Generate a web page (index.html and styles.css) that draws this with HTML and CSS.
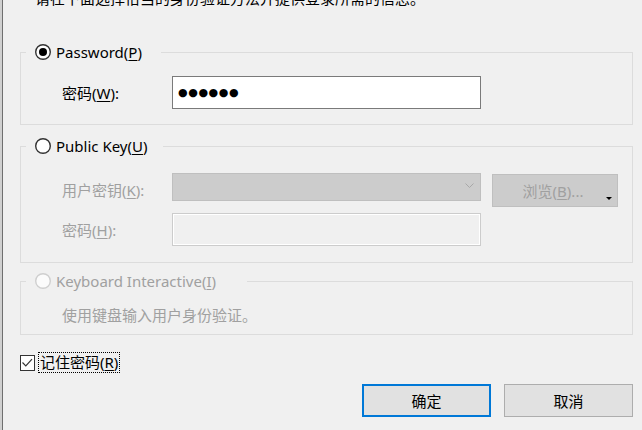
FILE: index.html
```html
<!DOCTYPE html>
<html lang="zh-CN">
<head>
<meta charset="utf-8">
<title>身份验证</title>
<link rel="stylesheet" href="styles.css">
</head>
<body>
<div class="window">
  <div class="edge"></div>
  <main class="dialog">
    <p class="intro">请在下面选择恰当的身份验证方法并提供登录所需的信息。</p>

    <fieldset class="group group--password">
      <legend class="legend legend--password">
        <svg class="radio" width="16" height="16" viewBox="0 0 16 16"><circle cx="8" cy="8" r="7.3" fill="#fff" stroke="#333" stroke-width="1.4"/><circle cx="8" cy="8" r="4" fill="#000"/></svg>
        <span class="legend-text">Password(<u>P</u>)</span>
      </legend>
      <div class="group-body group-body--password">
        <div class="row">
          <span class="label">密码(<u>W</u>):</span>
          <div class="textbox"><span class="mask">●●●●●●</span></div>
        </div>
      </div>
    </fieldset>

    <fieldset class="group group--key">
      <legend class="legend legend--key">
        <svg class="radio" width="16" height="16" viewBox="0 0 16 16"><circle cx="8" cy="8" r="7.3" fill="#fff" stroke="#333" stroke-width="1.4"/></svg>
        <span class="legend-text">Public Key(<u>U</u>)</span>
      </legend>
      <div class="group-body group-body--key">
        <div class="row row--key">
          <span class="label label--tall is-disabled">用户密钥(<u>K</u>):</span>
          <div class="combo">
            <svg class="chevron" width="9" height="6" viewBox="0 0 9 6"><polyline points="0.5,0.5 4.5,4.5 8.5,0.5" fill="none" stroke="#a8a8a8" stroke-width="1"/></svg>
          </div>
          <button class="browse" type="button" disabled>浏览(<u>B</u>)...<span class="drop-mark"></span></button>
        </div>
        <div class="row row--passphrase">
          <span class="label is-disabled">密码(<u>H</u>):</span>
          <div class="textbox textbox--disabled"></div>
        </div>
      </div>
    </fieldset>

    <fieldset class="group group--kbd">
      <legend class="legend legend--kbd">
        <svg class="radio" width="16" height="16" viewBox="0 0 16 16"><circle cx="8" cy="8" r="7.3" fill="#fbfbfb" stroke="#cfcfcf" stroke-width="1.4"/></svg>
        <span class="legend-text is-disabled">Keyboard Interactive(<u>I</u>)</span>
      </legend>
      <div class="group-body group-body--kbd">
        <p class="desc is-disabled">使用键盘输入用户身份验证。</p>
      </div>
    </fieldset>

    <div class="remember">
      <svg class="checkbox" width="15" height="16" viewBox="0 0 15 16"><rect x="0.5" y="0.5" width="14" height="15" fill="#fff" stroke="#333"/><polyline points="2.5,7.5 5.8,10.8 12,4.2" fill="none" stroke="#333" stroke-width="1.2"/></svg>
      <span class="remember-label">记住密码(<u>R</u>)</span>
    </div>

    <div class="actions">
      <button class="btn btn--default" type="button">确定</button>
      <button class="btn" type="button">取消</button>
    </div>
  </main>
</div>
</body>
</html>
```
FILE: styles.css
```css
* { box-sizing: border-box; }

html, body {
  margin: 0;
  height: 100%;
}

body {
  background: #f0f0f0;
  color: #000;
  font-family: "Noto Sans", "Noto Sans CJK SC", sans-serif;
  font-size: 15px;
  line-height: 20px;
  overflow: hidden;
}

u {
  text-decoration: underline;
  text-decoration-thickness: 1px;
  text-underline-offset: 2px;
}

.window {
  display: flex;
  height: 430px;
}

.edge {
  flex: none;
  width: 3px;
  background: #d0d0d0;
  border-right: 1px solid #6f6f6f;
}

.dialog {
  flex: none;
  width: 630px;
  padding-left: 17px;
  display: flex;
  flex-direction: column;
}

.intro {
  margin: -12px 0 0 15px;
  height: 20px;
  white-space: nowrap;
}

.group {
  margin: 0;
  min-width: 0;
  border: 1px solid #dcdcdc;
  padding: 0 0 0 5px;
}

.group--password { margin-top: 34px; }
.group--key { margin-top: 11px; }
.group--kbd { margin-top: 8px; }

.legend {
  height: 20px;
  padding: 0 0 0 9px;
  margin: 0;
  display: flex;
  align-items: center;
  gap: 5px;
  white-space: nowrap;
}

.legend--password { width: 135px; }
.legend--key { width: 137px; }
.legend--kbd { width: 221px; }

.radio { flex: none; display: block; }

.group-body { padding-left: 36px; }
.group-body--password { padding-top: 14px; padding-bottom: 15px; }
.group-body--key { padding-top: 17px; padding-bottom: 16px; }
.group-body--kbd { padding-top: 14px; padding-bottom: 9px; }

.row {
  display: flex;
  align-items: center;
}

.row--key {
  align-items: flex-start;
  height: 34px;
}

.row--passphrase { margin-top: 6px; }

.label {
  flex: none;
  width: 110px;
  white-space: nowrap;
}

.label--tall {
  align-self: stretch;
  display: flex;
  align-items: center;
}

.is-disabled { color: #a0a0a0; }

.textbox {
  flex: none;
  width: 309px;
  height: 33px;
  border: 1px solid #7a7a7a;
  background: #fff;
  padding-left: 5px;
  display: flex;
  align-items: center;
}

.textbox--disabled {
  border-color: #cccccc;
  background: #f0f0f0;
  box-shadow: inset 0 0 0 1px #ffffff;
}

.mask {
  font-family: "DejaVu Sans", sans-serif;
  font-size: 11px;
  letter-spacing: 0.6px;
  line-height: 1;
}

.combo {
  flex: none;
  width: 309px;
  height: 28px;
  background: #cccccc;
  border: 1px solid #bfbfbf;
  display: flex;
  align-items: center;
  justify-content: flex-end;
  padding-right: 6px;
}

.chevron { display: block; margin-top: -2px; }

.browse {
  position: relative;
  flex: none;
  width: 126px;
  height: 33px;
  margin: 1px 0 0 11px;
  background: #cccccc;
  border: 1px solid #bfbfbf;
  color: #a0a0a0;
  font: inherit;
  padding: 0 4px 0 0;
}

.drop-mark {
  position: absolute;
  right: 5px;
  bottom: 6px;
  width: 0;
  height: 0;
  border-left: 3px solid transparent;
  border-right: 3px solid transparent;
  border-top: 3px solid #000;
}

.desc {
  margin: 0;
  height: 20px;
  white-space: nowrap;
}

.remember {
  display: flex;
  align-items: center;
  height: 21px;
  margin-top: 17px;
}

.checkbox { flex: none; display: block; }

.remember-label {
  margin-left: 3px;
  height: 21px;
  line-height: 19px;
  padding: 0 1px;
  border: 1px dotted #000;
  white-space: nowrap;
}

.actions {
  display: flex;
  justify-content: flex-end;
  gap: 13px;
  margin-top: 11px;
}

.btn {
  width: 129px;
  height: 33px;
  background: #e1e1e1;
  border: 1px solid #adadad;
  color: #000;
  font: inherit;
  padding: 0;
}

.btn--default { border: 2px solid #0078d7; }
```
